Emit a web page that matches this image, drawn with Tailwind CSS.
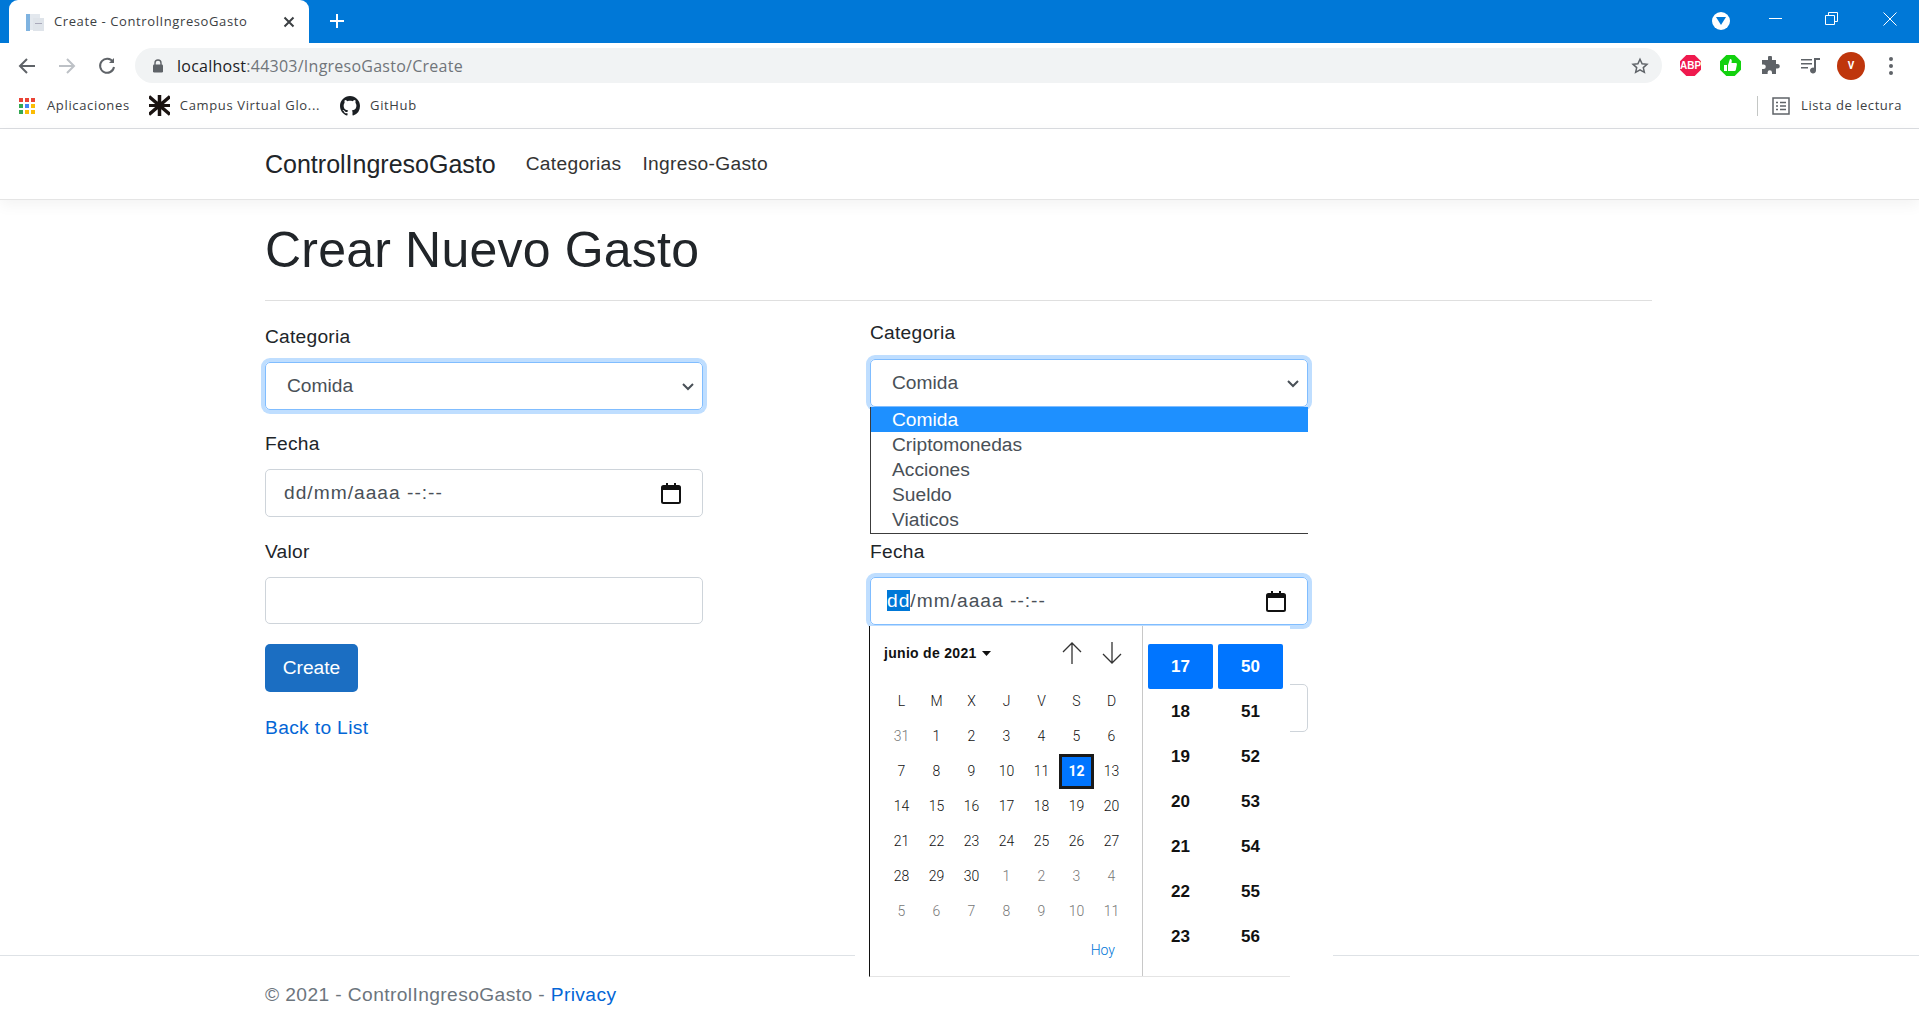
<!DOCTYPE html>
<html lang="es">
  <head>
    <meta charset="UTF-8" />
    <title>Create - ControlIngresoGasto</title>
    <script src="https://cdn.jsdelivr.net/npm/@tailwindcss/browser@4"></script>
  </head>
  <body class="bg-white h-[1028px] overflow-hidden flex flex-col font-['Liberation_Sans',sans-serif] text-[#212529]">
    <!-- browser chrome -->
    <div class="h-[43px] shrink-0 bg-[#0078d7] flex items-end pl-[9px] relative">
      <div class="w-[300px] h-[43px] bg-white rounded-t-[9px] flex items-center pl-[16px] pr-[14px] gap-[9px] font-['Open_Sans',sans-serif] text-[13px] text-[#3c4043]">
        <svg width="20" height="20" viewBox="0 0 20 20"><rect x="5" y="2" width="10" height="16" fill="#e3e8ee"/><rect x="1" y="2" width="4" height="17" fill="#7fb3e0"/><rect x="8" y="6" width="11" height="13" fill="#dfe4ea"/><rect x="10" y="11" width="7" height="1" fill="#aab"/></svg>
        <span class="flex-1 whitespace-nowrap tracking-[0.6px]">Create - ControlIngresoGasto</span>
        <svg width="12" height="12" viewBox="0 0 12 12" stroke="#3c4043" stroke-width="2"><path d="M1.5 1.5l9 9M10.5 1.5l-9 9"/></svg>
      </div>
      <svg class="ml-[20px] mb-[14px]" width="16" height="16" viewBox="0 0 16 16" stroke="#fff" stroke-width="2"><path d="M8 1v14M1 8h14"/></svg>
      <div class="absolute right-0 top-0 h-[43px] flex items-center">
        <div class="w-[18px] h-[18px] rounded-full bg-white flex items-center justify-center mr-[39px] mt-[-1px]">
          <svg width="10" height="8" viewBox="0 0 10 8"><path d="M0 0h10L5 8z" fill="#0078d7"/></svg>
        </div>
        <svg class="mr-[43px] mt-[-6px]" width="13" height="2"><rect width="13" height="1" fill="#fff"/></svg>
        <svg class="mr-[45px] mt-[-6px]" width="13" height="13" viewBox="0 0 13 13" fill="none" stroke="#fff"><path d="M.5 3.5h9v9h-9zM3.5 3V.5h9v9H10"/></svg>
        <svg class="mr-[22px] mt-[-6px]" width="14" height="14" viewBox="0 0 14 14" stroke="#fff"><path d="M.5.5l13 13M13.5.5l-13 13"/></svg>
      </div>
    </div>
    <div class="h-[45px] shrink-0 bg-white flex items-center pl-[17px] pr-[26px]">
      <svg width="20" height="20" viewBox="0 0 20 20" fill="none" stroke="#5f6368" stroke-width="2"><path d="M18 10H3M10 3l-7 7 7 7"/></svg>
      <svg class="ml-[20px]" width="20" height="20" viewBox="0 0 20 20" fill="none" stroke="#bdc1c6" stroke-width="2"><path d="M2 10h15M10 3l7 7-7 7"/></svg>
      <svg class="ml-[20px]" width="20" height="20" viewBox="0 0 20 20" fill="none" stroke="#5f6368" stroke-width="2"><path d="M16 6a7 7 0 1 0 1 5"/><path d="M17 2v5h-5" fill="#5f6368" stroke="none"/></svg>
      <div class="ml-[18px] flex-1 h-[35px] rounded-full bg-[#f1f3f4] flex items-center pl-[17px] pr-[13px]">
        <svg width="12" height="14" viewBox="0 0 12 14"><path d="M3 6V4a3 3 0 0 1 6 0v2" fill="none" stroke="#5f6368" stroke-width="1.4"/><rect x="1" y="5.5" width="10" height="8" rx="1.2" fill="#5f6368"/></svg>
        <span class="ml-[13px] flex-1 font-['Open_Sans',sans-serif] text-[16px] tracking-[0.25px] text-[#70757a]"><span class="text-[#202124]">localhost</span>:44303/IngresoGasto/Create</span>
        <svg width="18" height="18" viewBox="0 0 24 24" fill="none" stroke="#5f6368" stroke-width="2"><path d="M12 3l2.8 6 6.5.7-4.9 4.4 1.4 6.4L12 17.2l-5.8 3.3 1.4-6.4L2.700 9.700 9.200 9z"/></svg>
      </div>
      <div class="ml-[18px] w-[21px] h-[21px] bg-[#ef1a4e] flex items-center justify-center text-white text-[10px] font-bold [clip-path:polygon(30%_0,70%_0,100%_30%,100%_70%,70%_100%,30%_100%,0_70%,0_30%)]">ABP</div>
      <div class="ml-[19px] w-[21px] h-[21px] bg-[#12d10e] flex items-center justify-center [clip-path:polygon(30%_0,70%_0,100%_30%,100%_70%,70%_100%,30%_100%,0_70%,0_30%)]">
        <svg width="13" height="13" viewBox="0 0 13 13" fill="#fff"><path d="M0 6h3v6H0zM4 6l2-6c2 0 2 2 1.500 4H12c1 0 1 1 .8 2l-1 5c-.2.700-.6 1-1.300 1H4z"/></svg>
      </div>
      <svg class="ml-[20px]" width="19" height="19" viewBox="0 0 19 19" fill="#5f6368"><path d="M7 1.500a2 2 0 0 1 4 0V4h4v4h1.500a2.300 2.300 0 0 1 0 4.600H15V18h-4v-1.500a2.200 2.200 0 0 0-4.400 0V18H1v-5h1.500a2.300 2.300 0 0 0 0-4.600H1V4h6z"/></svg>
      <svg class="ml-[21px]" width="20" height="18" viewBox="0 0 20 18" fill="#5f6368"><path d="M0 2h11v1.600H0zM0 6h11v1.600H0zM0 10h7v1.600H0zM13 1h6v2h-4v10.500a3 3 0 1 1-2-2.800z"/></svg>
      <div class="ml-[16px] w-[28px] h-[28px] rounded-full bg-[#bf360c] flex items-center justify-center text-white text-[10px] font-bold font-['Roboto',sans-serif]">V</div>
      <div class="ml-[24px] flex flex-col gap-[3px]">
        <span class="w-[4px] h-[4px] rounded-full bg-[#5f6368]"></span>
        <span class="w-[4px] h-[4px] rounded-full bg-[#5f6368]"></span>
        <span class="w-[4px] h-[4px] rounded-full bg-[#5f6368]"></span>
      </div>
    </div>
    <div class="h-[41px] shrink-0 bg-white border-b border-[#dadce0] flex items-center pl-[19px] pr-[17px] pb-[5px] font-['Open_Sans',sans-serif] text-[13px] tracking-[0.65px] text-[#3c4043]">
      <svg width="16" height="16" viewBox="0 0 16 16">
        <rect width="4" height="4" fill="#ea4335"/><rect x="6" width="4" height="4" fill="#ea4335"/><rect x="12" width="4" height="4" fill="#ea4335"/>
        <rect y="6" width="4" height="4" fill="#34a853"/><rect x="6" y="6" width="4" height="4" fill="#4285f4"/><rect x="12" y="6" width="4" height="4" fill="#fbbc04"/>
        <rect y="12" width="4" height="4" fill="#34a853"/><rect x="6" y="12" width="4" height="4" fill="#fbbc04"/><rect x="12" y="12" width="4" height="4" fill="#fbbc04"/>
      </svg>
      <span class="ml-[12px]">Aplicaciones</span>
      <svg class="ml-[19px]" width="21" height="21" viewBox="0 0 21 21" stroke="#1a1311" fill="none"><path stroke-width="3.500" d="M10.500 0v21M0 1.500l21 18M21 1.500l-21 18"/><path stroke-width="3" d="M0 10.500h21"/></svg>
      <span class="ml-[10px]">Campus Virtual Glo...</span>
      <svg class="ml-[20px]" width="20" height="20" viewBox="0 0 16 16" fill="#1b1f23"><path d="M8 0C3.580 0 0 3.580 0 8c0 3.540 2.290 6.530 5.470 7.590.4.070.55-.17.55-.38 0-.19-.01-.82-.01-1.490-2.010.37-2.530-.49-2.690-.94-.09-.23-.48-.94-.82-1.130-.28-.15-.68-.52-.01-.53.630-.01 1.080.580 1.230.820.720 1.210 1.870.870 2.330.660.070-.520.280-.870.510-1.070-1.780-.200-3.640-.890-3.640-3.950 0-.870.310-1.590.820-2.150-.080-.200-.360-1.020.080-2.120 0 0 .670-.210 2.200.820.640-.180 1.320-.270 2-.270s1.360.090 2 .270c1.530-1.040 2.200-.820 2.200-.820.440 1.100.160 1.920.080 2.120.510.560.820 1.270.820 2.150 0 3.070-1.870 3.750-3.650 3.950.290.250.540.730.540 1.480 0 1.070-.010 1.930-.010 2.200 0 .210.150.460.550.380A8.010 8.010 0 0 0 16 8c0-4.420-3.580-8-8-8z"/></svg>
      <span class="ml-[10px]">GitHub</span>
      <div class="ml-auto w-px h-[20px] bg-[#c4c7c5]"></div>
      <svg class="ml-[14px]" width="18" height="18" viewBox="0 0 18 18" fill="none" stroke="#5f6368" stroke-width="1.500"><rect x="1" y="1" width="16" height="16"/><path d="M4 5.500h2M8 5.500h6M4 9h2M8 9h6M4 12.500h2M8 12.500h6"/></svg>
      <span class="ml-[11px] tracking-[0.55px]">Lista de lectura</span>
    </div>

    <!-- navbar -->
    <nav class="h-[71px] shrink-0 bg-white border-b border-[#e5e5e5] shadow-[0_5px_14px_rgba(0,0,0,0.05)] flex items-center pl-[265px] pt-[1px] text-[19.200px] text-[#333] tracking-[0.3px] relative">
      <span class="text-[25px] tracking-normal text-[#212529] mr-[30px]">ControlIngresoGasto</span>
      <a class="mr-[21px]">Categorias</a>
      <a>Ingreso-Gasto</a>
    </nav>

    <main class="flex-1 ml-[265px] w-[1387px] pt-[21px] text-[19.200px] relative">
      <h1 class="text-[50px] tracking-[0.2px] leading-[58px] h-[79px]">Crear Nuevo Gasto</h1>
      <hr class="border-[#dfdfdf] mb-[16px]" />
      <div class="flex gap-[167px] items-start">
        <!-- left form -->
        <form class="w-[438px] pt-[5px]">
          <label class="block leading-[29px] mb-[11px] tracking-[0.25px]">Categoria</label>
          <div class="h-[48px] rounded-[5px] border border-[#80bdff] shadow-[0_0_0_4px_#bfdeff] flex items-center pl-[21px] pr-[7px] text-[#495057]">
            <span class="flex-1">Comida</span>
            <svg width="14" height="14" viewBox="0 0 14 14" fill="none" stroke="#495057" stroke-width="2"><path d="M2 5l5 5 5-5"/></svg>
          </div>
          <label class="block leading-[29px] mt-[19px] mb-[11px] tracking-[0.25px]">Fecha</label>
          <div class="h-[48px] rounded-[5px] border border-[#ced4da] flex items-center pl-[18px] pr-[21px] text-[#495057]">
            <span class="flex-1 whitespace-pre tracking-[1px]">dd/mm/aaaa --:--</span>
            <svg width="20" height="21" viewBox="0 0 20 21" fill="none"><rect x="1" y="3" width="18" height="17" rx="1.500" stroke="#111" stroke-width="2"/><path d="M1 3h18v4H1zM5 0h2v3H5zM13 0h2v3h-2z" fill="#111"/></svg>
          </div>
          <label class="block leading-[29px] mt-[20px] mb-[11px] tracking-[0.25px]">Valor</label>
          <div class="h-[47px] rounded-[5px] border border-[#ced4da]"></div>
          <button type="button" class="block mt-[20px] h-[48px] w-[93px] rounded-[5px] bg-[#1b6ec2] text-white">Create</button>
          <a class="block mt-[22px] text-[#0366d6] tracking-[0.35px]">Back to List</a>
        </form>
        <!-- right form, native popups open -->
        <form class="w-[438px] pt-[1px] relative">
          <label class="block leading-[29px] mb-[12px] tracking-[0.25px]">Categoria</label>
          <div class="h-[48px] rounded-[5px] border border-[#80bdff] shadow-[0_0_0_4px_#bfdeff] flex items-center pl-[21px] pr-[7px] text-[#495057] relative">
            <span class="flex-1">Comida</span>
            <svg width="14" height="14" viewBox="0 0 14 14" fill="none" stroke="#495057" stroke-width="2"><path d="M2 5l5 5 5-5"/></svg>
          </div>
          <ul class="relative bg-white border-l border-b border-[#3c3c3c] leading-[25px] text-[#495057] h-[127px]">
            <li class="pl-[21px] bg-[#1e90ff] text-white">Comida</li>
            <li class="pl-[21px]">Criptomonedas</li>
            <li class="pl-[21px]">Acciones</li>
            <li class="pl-[21px]">Sueldo</li>
            <li class="pl-[21px]">Viaticos</li>
          </ul>
          <label class="block leading-[29px] mt-[3px] mb-[11px] tracking-[0.25px]">Fecha</label>
          <div class="h-[48px] rounded-[5px] border border-[#80bdff] shadow-[0_0_0_4px_#bfdeff] flex items-center pl-[16px] pr-[21px] text-[#495057]">
            <span class="flex-1 whitespace-pre tracking-[1px]"><span class="bg-[#0078d7] text-white">dd</span>/mm/aaaa --:--</span>
            <svg width="20" height="21" viewBox="0 0 20 21" fill="none"><rect x="1" y="3" width="18" height="17" rx="1.500" stroke="#111" stroke-width="2"/><path d="M1 3h18v4H1zM5 0h2v3H5zM13 0h2v3h-2z" fill="#111"/></svg>
          </div>
          <div class="mt-[59px] h-[48px] rounded-[5px] border border-[#ced4da]"></div>
          <!-- date picker popup -->
          <div class="absolute z-20 left-[-1px] top-[309px] w-[421px] h-[351px] bg-white border-l border-b border-l-[#111] border-b-[#e4e4e4] flex font-['Roboto',sans-serif]">
            <div class="w-[273px] border-r border-[#c8c8c8] relative">
              <div class="flex items-center h-[54px] mb-[4px] pl-[14px] text-[14px] tracking-[0.3px] font-bold font-['Liberation_Sans',sans-serif] text-[#111]">
                <span>junio de 2021</span>
                <svg class="ml-[5px]" width="9" height="5" viewBox="0 0 9 5"><path d="M0 0h9L4.500 5z" fill="#111"/></svg>
                <svg class="ml-[71px]" width="20" height="22" viewBox="0 0 20 22" fill="none" stroke="#333" stroke-width="1.300"><path d="M10 22V1M1 10l9-9 9 9"/></svg>
                <svg class="ml-[20px]" width="20" height="22" viewBox="0 0 20 22" fill="none" stroke="#333" stroke-width="1.300"><path d="M10 0v21M1 12l9 9 9-9"/></svg>
              </div>
              <div class="grid grid-cols-7 w-[245px] ml-[14px] auto-rows-[35px] items-center text-center text-[14px] font-light text-[#111]">
                <span>L</span><span>M</span><span>X</span><span>J</span><span>V</span><span>S</span><span>D</span>
                <span class="text-[#777]">31</span><span>1</span><span>2</span><span>3</span><span>4</span><span>5</span><span>6</span>
                <span>7</span><span>8</span><span>9</span><span>10</span><span>11</span><span class="h-[35px] leading-[29px] border-[3px] border-[#1a1a1a] bg-[#0075ff] text-white font-bold">12</span><span>13</span>
                <span>14</span><span>15</span><span>16</span><span>17</span><span>18</span><span>19</span><span>20</span>
                <span>21</span><span>22</span><span>23</span><span>24</span><span>25</span><span>26</span><span>27</span>
                <span>28</span><span>29</span><span>30</span><span class="text-[#777]">1</span><span class="text-[#777]">2</span><span class="text-[#777]">3</span><span class="text-[#777]">4</span>
                <span class="text-[#777]">5</span><span class="text-[#777]">6</span><span class="text-[#777]">7</span><span class="text-[#777]">8</span><span class="text-[#777]">9</span><span class="text-[#777]">10</span><span class="text-[#777]">11</span>
              </div>
              <div class="text-right pr-[27px] pt-[11px] text-[14px] font-light text-[#0075d8]">Hoy</div>
            </div>
            <div class="pl-[5px] pt-[18px] grid grid-cols-[65px_65px] gap-x-[5px] auto-rows-[45px] text-center text-[17px] font-bold font-['Liberation_Sans',sans-serif] text-[#111] leading-[45px]">
              <span class="bg-[#0075ff] text-white rounded-[2px]">17</span><span class="bg-[#0075ff] text-white rounded-[2px]">50</span>
              <span>18</span><span>51</span><span>19</span><span>52</span><span>20</span><span>53</span><span>21</span><span>54</span><span>22</span><span>55</span><span>23</span><span>56</span>
            </div>
          </div>
        </form>
      </div>
    </main>

    <footer class="absolute left-0 right-0 top-[955px] h-[73px] border-t border-[#dee2e6] pl-[265px] pt-[25px] text-[19.200px] tracking-[0.4px] text-[#6c757d]">
      © 2021 - ControlIngresoGasto - <a class="text-[#0366d6]">Privacy</a>
    </footer>
    <!-- white halo the popup leaves on the footer line -->
    <div class="absolute z-10 left-[855px] top-[945px] w-[478px] h-[83px] bg-white"></div>
  </body>
</html>
